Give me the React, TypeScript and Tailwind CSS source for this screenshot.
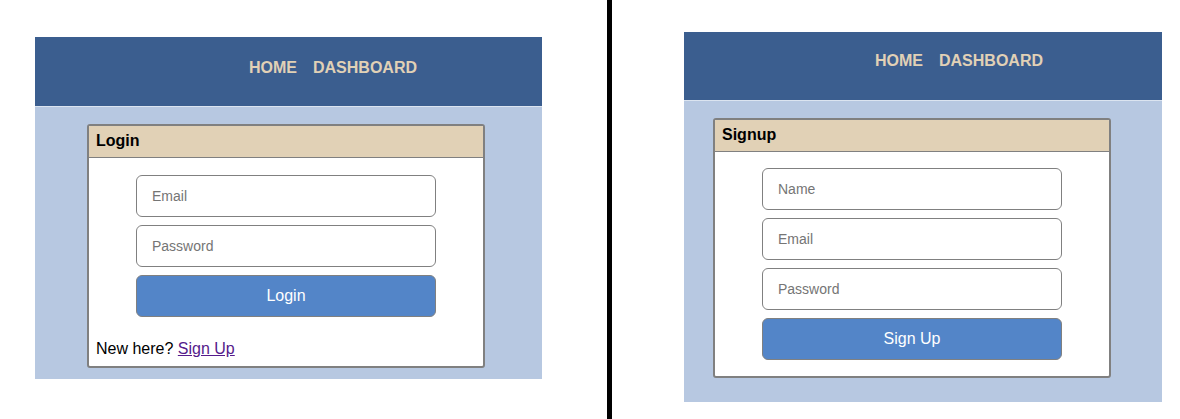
import React from "react";

function NavBar({ padLeft, padTop, height }: { padLeft: string; padTop: string; height: string }) {
  return (
    <div className={`bg-[#3b5e8f] border-b border-[#dbe4f0] ${height}`}>
      <nav className={`flex gap-4 ${padLeft} ${padTop}`}>
        <a href="#" className="text-[16px] leading-[18px] font-bold text-[#e1d1b6] no-underline">
          HOME
        </a>
        <a href="#" className="text-[16px] leading-[18px] font-bold text-[#e1d1b6] no-underline">
          DASHBOARD
        </a>
      </nav>
    </div>
  );
}

function Field({ placeholder, type = "text" }: { placeholder: string; type?: string }) {
  return (
    <input
      type={type}
      placeholder={placeholder}
      className="w-[300px] h-[42px] rounded-[6px] border border-[#808080] bg-white px-[15px] text-[14px] text-black placeholder:text-[#757575] outline-none"
    />
  );
}

function Card({ title, children, bodyTop }: { title: string; children: React.ReactNode; bodyTop: string }) {
  return (
    <div className="w-[398px] rounded-[3px] border-2 border-[#808080] bg-white overflow-hidden">
      <div className="h-[32px] bg-[#e1d1b6] border-b border-[#808080] pl-[7px] pt-[6px]">
        <h2 className="text-[16px] leading-[18px] font-bold text-black">{title}</h2>
      </div>
      <div className={bodyTop}>{children}</div>
    </div>
  );
}

function SubmitButton({ label }: { label: string }) {
  return (
    <button className="w-[300px] h-[42px] rounded-[6px] border border-[#808080] bg-[#5385c8] text-white text-[16px]">
      {label}
    </button>
  );
}

export default function App() {
  return (
    <div className="flex h-[419px] w-[1180px] bg-white font-['Liberation_Sans',Arial,sans-serif]">
      {/* login window */}
      <div className="w-[607px] pl-[35px] pt-[37px]">
        <div className="w-[507px]">
          <NavBar padLeft="pl-[214px]" padTop="pt-[22px]" height="h-[70px]" />
          <div className="bg-[#b7c8e1] h-[272px] pl-[52px] pt-[17px]">
            <Card title="Login" bodyTop="pt-[17px]">
              <div className="flex flex-col items-center gap-2">
                <Field placeholder="Email" type="email" />
                <Field placeholder="Password" type="password" />
                <SubmitButton label="Login" />
              </div>
              <p className="mt-[23px] pl-[7px] pb-[8px] text-[16px] leading-[18px] text-black">
                New here?{" "}
                <a href="#" className="text-[#551a8b] underline">
                  Sign Up
                </a>
              </p>
            </Card>
          </div>
        </div>
      </div>

      {/* divider */}
      <div className="w-[5px] h-full bg-black" />

      {/* signup window */}
      <div className="pl-[72px] pt-[32px]">
        <div className="w-[478px]">
          <NavBar padLeft="pl-[191px]" padTop="pt-[20px]" height="h-[69px]" />
          <div className="bg-[#b7c8e1] h-[301px] pl-[29px] pt-[17px]">
            <Card title="Signup" bodyTop="pt-[16px] pb-[16px]">
              <div className="flex flex-col items-center gap-2">
                <Field placeholder="Name" />
                <Field placeholder="Email" type="email" />
                <Field placeholder="Password" type="password" />
                <SubmitButton label="Sign Up" />
              </div>
            </Card>
          </div>
        </div>
      </div>
    </div>
  );
}
